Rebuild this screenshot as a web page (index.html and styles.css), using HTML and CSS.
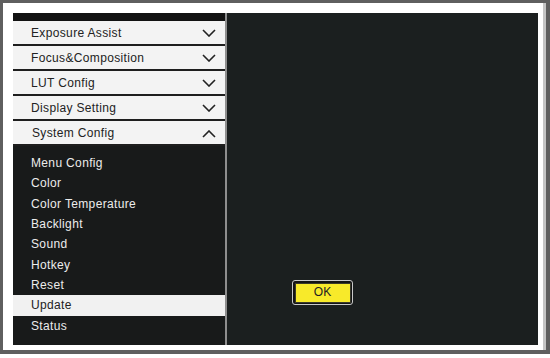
FILE: index.html
```html
<!DOCTYPE html>
<html>
	<head>
		<meta charset="utf-8">
		<title>System Config</title>
		<link rel="stylesheet" href="styles.css">
	</head>
	<body>
		<div class="frame">
			<div class="screen">
				<!-- 左侧菜单 -->
				<div class="menu">
					<div class="menu-top"></div>
					<div class="group">Exposure Assist
						<svg class="chev" width="14" height="8" viewBox="0 0 14 8"><polyline points="1,1 7,7 13,1"/></svg>
					</div>
					<div class="group">Focus&amp;Composition
						<svg class="chev" width="14" height="8" viewBox="0 0 14 8"><polyline points="1,1 7,7 13,1"/></svg>
					</div>
					<div class="group">LUT Config
						<svg class="chev" width="14" height="8" viewBox="0 0 14 8"><polyline points="1,1 7,7 13,1"/></svg>
					</div>
					<div class="group">Display Setting
						<svg class="chev" width="14" height="8" viewBox="0 0 14 8"><polyline points="1,1 7,7 13,1"/></svg>
					</div>
					<div class="group open">System Config
						<svg class="chev" width="14" height="8" viewBox="0 0 14 8"><polyline points="1,7 7,1 13,7"/></svg>
					</div>
					<!-- 子菜单 -->
					<ul class="sub">
						<li>Menu Config</li>
						<li>Color</li>
						<li>Color Temperature</li>
						<li>Backlight</li>
						<li>Sound</li>
						<li>Hotkey</li>
						<li>Reset</li>
						<li class="active">Update</li>
						<li>Status</li>
					</ul>
				</div>
				<!-- 右侧内容 -->
				<div class="panel">
					<div class="btn"><span>OK</span></div>
				</div>
			</div>
		</div>
	</body>
</html>
```

FILE: styles.css
```css
* {
	margin: 0;
	padding: 0;
	box-sizing: border-box;
}
body {
	background: #fff;
	font-family: "Liberation Sans", Arial, sans-serif;
	font-size: 12px;
	letter-spacing: 0.35px;
}
.frame {
	width: 550px;
	height: 354px;
	border: 3px solid #5f5f5f;
	border-right-width: 4px;
	border-bottom-width: 4px;
	padding: 10px 8px 5px 10px;
	box-shadow: inset -3px 0 0 #c4c4c4;
}
.screen {
	display: flex;
	height: 332px;
	background: #1b1f1f;
}
/* 宽度包含右侧分割线 */
.menu {
	width: 214px;
	background: #181a1a;
	display: flex;
	flex-direction: column;
	border-right: 2px solid #8e8e8e;
}
.menu-top {
	height: 8px;
	background: #121212;
}
.group {
	height: 25px;
	line-height: 25px;
	padding: 0 9px 0 18px;
	background: #f3f3f3;
	border-bottom: 2px solid #1e1e1e;
	color: #222;
	display: flex;
	justify-content: space-between;
	align-items: flex-start;
}
.group.open {
	padding-left: 19px;
}
.chev {
	margin-top: 8px;
	fill: none;
	stroke: #222;
	stroke-width: 1.6;
}
.open .chev {
	margin-top: 9px;
}
.sub {
	list-style: none;
	padding-top: 7px;
}
.sub li {
	height: 20.35px;
	line-height: 20.35px;
	padding-left: 18px;
	color: #ececec;
}
.sub li.active {
	background: #f1f1f1;
	color: #222;
}
.panel {
	flex: 1;
	display: flex;
	flex-direction: column;
	justify-content: flex-end;
	align-items: flex-start;
	padding: 0 0 40px 65px;
}
.btn {
	width: 61px;
	height: 25px;
	border: 1.5px solid #c9c9c9;
	border-radius: 3px;
	padding: 1.5px;
	background: #141414;
}
.btn span {
	display: block;
	height: 100%;
	background: #f8ea2a;
	border: 1px solid #3a3a2a;
	color: #222;
	text-align: center;
	line-height: 17px;
	letter-spacing: 0;
}
```
